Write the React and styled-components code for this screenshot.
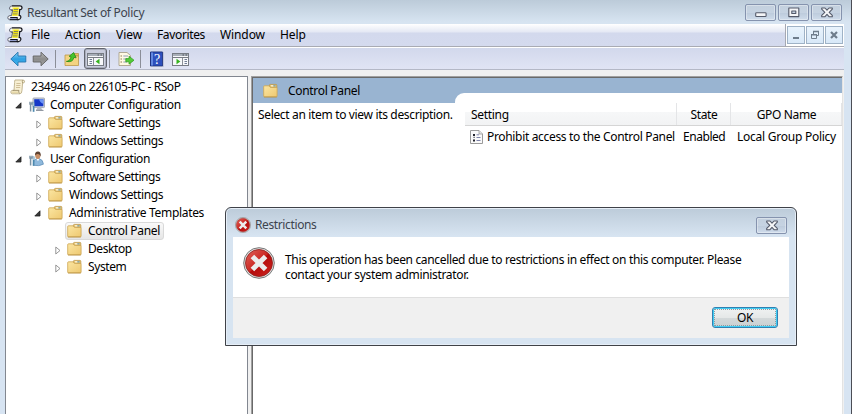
import React from 'react';
import styled, { createGlobalStyle, css } from 'styled-components';

const GlobalStyle = createGlobalStyle`
  * { box-sizing: border-box; }
  html, body { margin: 0; padding: 0; }
  body {
    font-family: "Noto Sans", "Open Sans", sans-serif;
    font-size: 12px;
    line-height: 16px;
    color: #000;
    overflow: hidden;
  }
  svg { display: block; flex: none; }
`;

/* ---------- shared ---------- */

const Label = styled.span`
  white-space: nowrap;
  letter-spacing: ${(p) => p.$ls ?? -0.3}px;
`;

/* ---------- main window ---------- */

const Window = styled.div`
  position: relative;
  display: flex;
  flex-direction: column;
  width: 852px;
  height: 414px;
  overflow: hidden;
  background: #d7e4f2;
  border-right: 1px solid #4b4d55;
`;

const TitleBar = styled.header`
  flex: none;
  height: 24px;
  display: flex;
  align-items: flex-start;
  padding: 4px 9px 0 7px;
  background: linear-gradient(#bccbd9, #d7e4f1 22px);
  color: #3d444e;
`;

const TitleText = styled.div`
  flex: 1;
  display: flex;
  gap: 4px;
  padding-top: 1px;
`;

const CaptionButtons = styled.div`
  display: flex;
  gap: 2px;
`;

const CaptionButton = styled.button`
  width: 31px;
  height: 17px;
  padding: 0;
  display: flex;
  align-items: center;
  justify-content: center;
  border: 1px solid #8593ae;
  border-radius: 2px;
  box-shadow: inset 0 0 0 1px rgba(255, 255, 255, 0.35);
  background: linear-gradient(#c3d0de, #c6d3e2 50%, #bccadb 51%, #cfdceb);
`;

const Body = styled.div`
  flex: 1;
  min-height: 0;
  display: flex;
  flex-direction: column;
  margin: 0 7px 0 5px;
  background: #f0f0f0;
`;

const MenuBar = styled.nav`
  flex: none;
  height: 24px;
  display: flex;
  background: #fff;
  border-bottom: 1px solid #fff;
`;

const MenuItems = styled.div`
  width: 781px;
  display: flex;
  align-items: flex-start;
  padding: 3px 0 0 2px;
  background: linear-gradient(#fff, #e4e8f4 8px, #d3d9ed 9px, #d4daee);
  border-right: 1px solid #a5a8b2;
  border-bottom: 1px solid #a9abb3;
`;

const MenuItem = styled.div`
  width: ${(p) => p.$w}px;
`;

const ChildButtons = styled.div`
  flex: 1;
  display: flex;
  gap: 1px;
  padding: 2px 0 0 1px;
  border-bottom: 1px solid #a9abb3;
`;

const ChildButton = styled.button`
  width: 18px;
  height: 18px;
  padding: 0;
  display: flex;
  align-items: center;
  justify-content: center;
  border: 1px solid #9fb2c6;
  background: linear-gradient(#e9f3fc, #d8e8f8);
`;

const Toolbar = styled.div`
  flex: none;
  height: 22px;
  display: flex;
  align-items: center;
  padding-left: 5px;
  background: linear-gradient(#d2d8ec, #e0e4f4);
  border-bottom: 1px solid #b4b8c6;
`;

const Tool = styled.div`
  width: ${(p) => p.$w ?? 16}px;
  height: 21px;
  margin-left: ${(p) => p.$gap ?? 0}px;
  padding-top: 1px;
  display: flex;
  align-items: center;
  justify-content: center;
  ${(p) =>
    p.$pressed &&
    css`
      border: 1px solid #62656f;
      border-radius: 3px;
      box-shadow: inset 0 0 0 1px #a9adbb;
      background: #c9cddd;
    `}
`;

const Separator = styled.div`
  width: 1px;
  height: 18px;
  margin-left: ${(p) => p.$gap}px;
  background: #8b8e98;
`;

const Panes = styled.main`
  flex: 1;
  min-height: 0;
  display: flex;
  gap: 3px;
  padding-top: 6px;
`;

/* ---------- tree ---------- */

const TreePane = styled.section`
  width: 243px;
  padding-top: 1px;
  background: #fff;
  border: 1px solid #828790;
  border-bottom: 0;
`;

const TreeRow = styled.div`
  height: 18px;
  display: flex;
  align-items: center;
  padding-left: ${(p) => Math.max(0, p.$depth - 1) * 19 + (p.$depth ? 8 : 4)}px;
`;

const Twisty = styled.span`
  width: 15px;
  padding-left: ${(p) => (p.$open ? 1 : 3)}px;
  padding-top: ${(p) => (p.$open ? 1 : 2)}px;
`;

const TreeItem = styled.div`
  height: 18px;
  display: flex;
  align-items: center;
  gap: 5px;
  ${(p) =>
    p.$selected &&
    css`
      margin-left: -2px;
      padding: 0 3px 0 1px;
      border: 1px solid #d9d9d9;
      border-radius: 3px;
      background: linear-gradient(#f9f9f9, #e6e6e6);
    `}
`;

/* ---------- result pane ---------- */

const ResultPane = styled.section`
  flex: 1;
  display: flex;
  flex-direction: column;
  margin-right: 1px;
  background: #fff;
  border-top: 1px solid #a0a0a0;
  border-left: 1px solid #a0a0a0;
  border-right: 1px solid #e3e3e3;
`;

const ResultInner = styled.div`
  flex: 1;
  display: flex;
  flex-direction: column;
  border-top: 1px solid #696969;
  border-left: 1px solid #696969;
`;

const Banner = styled.div`
  height: 25px;
  display: flex;
  background: #99b4d1;
`;

const BannerTitle = styled.div`
  width: 202px;
  display: flex;
  align-items: center;
  gap: 9px;
  padding-left: 10px;
`;

const BannerNotch = styled.div`
  flex: 1;
  align-self: flex-end;
  height: 10px;
  background: #fff;
  border-top-left-radius: 9px;
`;

const ResultContent = styled.div`
  flex: 1;
  display: flex;
`;

const Description = styled.div`
  width: 212px;
  padding: 4px 0 0 5px;
`;

const List = styled.div`
  flex: 1;
`;

const Columns = styled.div`
  display: grid;
  grid-template-columns: 212px 54px 1fr;
`;

const HeadRow = styled(Columns)`
  height: 23px;
  border-bottom: 1px solid #d5d5d5;
  background: linear-gradient(#fff 9px, #f6f7f8 9px, #f2f3f4);
`;

const HeadCell = styled.div`
  padding: 4px 0 0 ${(p) => (p.$center ? 1 : 6)}px;
  text-align: ${(p) => (p.$center ? 'center' : 'left')};
  border-right: 1px solid #e4e5e7;
`;

const DataRow = styled(Columns)`
  height: 22px;
  align-items: center;
`;

const DataCell = styled.div`
  display: flex;
  gap: 4px;
  padding-left: ${(p) => p.$pad ?? 6}px;
`;

/* ---------- dialog ---------- */

const Dialog = styled.div`
  position: absolute;
  left: 225px;
  top: 207px;
  width: 572px;
  height: 139px;
  display: flex;
  flex-direction: column;
  padding: 0 6px 6px;
  border: 1px solid #3f4248;
  border-radius: 6px 6px 0 0;
  box-shadow: inset 0 0 0 1px #e6eef7;
  background: linear-gradient(#bccbd9, #d7e4f1 28px);
`;

const DialogTitle = styled.div`
  flex: none;
  height: 29px;
  display: flex;
  justify-content: space-between;
  padding: 9px 3px 0 3px;
  color: #3d444e;
`;

const DialogCaption = styled.div`
  display: flex;
  gap: 4px;
`;

const DialogBody = styled.div`
  flex: none;
  height: 60px;
  margin: 0 1px;
  display: flex;
  gap: 10px;
  padding: 10px 0 0 10px;
  background: #fff;
`;

const Message = styled.div`
  display: flex;
  flex-direction: column;
  padding-top: 5px;
  line-height: 15px;
`;

const DialogFooter = styled.div`
  height: 41px;
  margin: 0 1px;
  display: flex;
  justify-content: flex-end;
  padding: 9px 11px 0 0;
  border-top: 1px solid #dfdfdf;
  background: #f0f0f0;
`;

const OkButton = styled.button`
  width: 66px;
  height: 21px;
  padding: 1px;
  border: 1px solid #3180b2;
  border-radius: 3px;
  box-shadow: inset 0 0 0 1px #3fcdf3;
  background: linear-gradient(#f0f2f2, #e5e8e8 50%, #d4d9da 51%, #c9d0d2);
  font: inherit;
`;

const FocusRing = styled.span`
  display: block;
  height: 17px;
  line-height: 15px;
  border: 1px dotted #8a9ba3;
`;

/* ---------- icons ---------- */

const InkScroll = () => (
  <svg width="16" height="16" viewBox="0 0 16 16">
    <path d="M5 .8H13.2Q15.2 1 15 3Q14.8 4.8 12.6 4.5L12.2 10.2Q14.4 10.4 13.8 12.6Q13.2 14.8 11 14.8H2.6Q.4 14.6.7 12.4Q1 10.4 3.2 10.6H4.6L5.6 5H4Q2.2 4.8 2.5 2.9Q3 .8 5 .8Z" fill="#f8f8f4" />
    <path d="M5.2 1.6H12.4L11.6 11H4.6Z" fill="#fbf6a0" />
    <path d="M6.4 3.4H11.6M6.1 5.6H11.3M5.7 7.8H11M5.4 10H10.6" stroke="#f5e60a" strokeWidth="1.3" />
    <path d="M6.6 4.5H11.3M6.3 6.7H10.9M5.9 8.9H10.6" stroke="#5a5f3c" strokeWidth=".7" />
    <path d="M5 .9H13.2M4 5H5.8M2.6 14.7H11.4" stroke="#14151c" strokeWidth="1.2" />
    <path d="M5 .9Q2.9 1 2.5 3Q2.3 4.8 4 5M5.7 5L4.5 10.6H3Q1 10.6.8 12.4Q.6 14.4 2.6 14.7" fill="none" stroke="#55596a" strokeWidth=".9" />
    <path d="M13.2.9Q15.2 1.2 15 3Q14.7 4.9 12.7 4.5L12.2 10.4Q14.2 10.6 13.8 12.6Q13.3 14.6 11.2 14.7Q9.8 14.6 10.1 12.6H3.2" fill="none" stroke="#14151c" strokeWidth="1.2" />
    <path d="M2.4 13.6H9.4" stroke="#8d99cf" strokeWidth="1" />
  </svg>
);

const PaleScroll = () => (
  <svg width="16" height="16" viewBox="0 0 16 16">
    <path d="M5 1H13Q14.8 1.2 14.6 2.9Q14.4 4.2 12.6 4L12 11.2Q12 14.8 9.8 14.8H2.2Q.6 14.4.8 12.8Q1 11.4 2.6 11.4H4L4.6 3.6Q4.6 1.4 5 1Z" fill="#f8f0d4" stroke="#b5a77f" strokeWidth=".8" />
    <path d="M12.6 4Q11.8 2 13 1" fill="none" stroke="#9d8e66" strokeWidth=".8" />
    <path d="M6.4 4.5H10.6M6.2 6.5H10.4M6 8.5H10.2" stroke="#cbb991" strokeWidth=".9" />
    <path d="M2.6 11.4H9Q8 13 9.6 14.6" fill="none" stroke="#9d8e66" strokeWidth=".9" />
    <path d="M2 13.2H8" stroke="#e5d6a4" strokeWidth="1.4" />
  </svg>
);

const Folder = () => (
  <svg width="16" height="16" viewBox="0 0 16 16">
    <defs>
      <linearGradient id="folderFill" x1="0" y1="0" x2="1" y2="1">
        <stop offset="0" stopColor="#fbe6a2" />
        <stop offset="1" stopColor="#eec870" />
      </linearGradient>
    </defs>
    <path d="M6.5 4V2.2Q6.5 1.4 7.3 1.4H13Q13.8 1.4 13.8 2.2V5Z" fill="#eccb74" stroke="#bb9549" strokeWidth=".8" />
    <path d="M8 2.9H10.4" stroke="#fff" strokeWidth="1" />
    <path d="M10.4 2.9H12.6" stroke="#4f94cf" strokeWidth="1" />
    <path d="M.7 3.6Q.7 2.8 1.5 2.8H6L7.4 4.4H13.3Q14.1 4.4 14.1 5.2V13.2Q14.1 13.9 13.3 13.9H1.5Q.7 13.9.7 13.2Z" fill="url(#folderFill)" stroke="#cda552" strokeWidth=".8" />
    <path d="M1 14H13.8" stroke="#b08a3e" strokeWidth=".6" />
  </svg>
);

const Tools = () => (
  <g>
    <path d="M1.6 7V14.5M1 4.8V7H3V4.8" stroke="#7c93a5" strokeWidth="1.5" fill="none" />
    <path d="M4.6 5.5V14.8" stroke="#4c88ad" strokeWidth="1.7" />
    <path d="M4.6 5.5V9" stroke="#b0c9d8" strokeWidth="1" />
  </g>
);

const Computer = () => (
  <svg width="16" height="16" viewBox="0 0 16 16">
    <rect x="4" y="1" width="11.5" height="9.6" rx=".8" fill="#d6dbe2" stroke="#868e9b" strokeWidth=".7" />
    <rect x="5.2" y="2.2" width="9.2" height="7.1" fill="#1538c8" />
    <path d="M10 2.2H14.4V6.8Q11.2 6 10 2.2Z" fill="#6c94f5" />
    <path d="M8.5 10.7H12L13.5 13H7Z" fill="#b2b8c2" />
    <path d="M7 13.4H14.5" stroke="#858c97" strokeWidth="1" />
    <Tools />
  </svg>
);

const User = () => (
  <svg width="16" height="16" viewBox="0 0 16 16">
    <path d="M4.4 14.3Q4 8.5 8 7.6H10.2Q14.2 8.8 14.4 13.2Q10 15.5 4.4 14.3Z" fill="#8fb9dc" stroke="#5c8bb4" strokeWidth=".7" />
    <path d="M7.4 7.7L9 10.2L10.4 7.7Z" fill="#fff" />
    <ellipse cx="8.8" cy="4.6" rx="2.6" ry="3.4" fill="#c98f66" />
    <path d="M6 4.5Q5.8.7 9 .6Q12.2.8 11.7 5.4Q10.9 3.2 9 3Q7 2.8 6 4.5Z" fill="#5b4131" />
    <Tools />
  </svg>
);

const PolicyDoc = () => (
  <svg width="13" height="16" viewBox="0 0 13 16">
    <path d="M.5 1.5H9L12.5 5V14.5H.5Z" fill="#fafafa" stroke="#9b9b9b" />
    <path d="M9 1.5V5H12.5" fill="#e5e5e5" stroke="#9b9b9b" strokeWidth=".8" />
    <path d="M3 5H5V7H3ZM3 10.5H5V12.5H3Z" fill="#22242c" />
    <path d="M3.5 8.3H4.7" stroke="#22242c" />
    <path d="M6.5 5.8H9M6.5 8.5H10.5M6.5 11.5H10.5" stroke="#7e83a8" />
  </svg>
);

const Arrow = ({ forward }) => (
  <svg width="17" height="16" viewBox="0 0 17 16">
    <defs>
      <linearGradient id={forward ? 'fwd' : 'back'} x1="0" y1="0" x2="0" y2="1">
        <stop offset="0" stopColor={forward ? '#b9b9b9' : '#8bd4f8'} />
        <stop offset=".5" stopColor={forward ? '#8b8b8b' : '#2f9fe2'} />
        <stop offset="1" stopColor={forward ? '#a5a5a5' : '#45bdf2'} />
      </linearGradient>
    </defs>
    <path
      d="M.8 8L8 1.2V5H15.8V11H8V14.8Z"
      transform={forward ? 'translate(17 0) scale(-1 1)' : undefined}
      fill={`url(#${forward ? 'fwd' : 'back'})`}
      stroke={forward ? '#606060' : '#2472ab'}
      strokeWidth=".9"
      strokeLinejoin="round"
    />
  </svg>
);

const UpFolder = () => (
  <svg width="16" height="16" viewBox="0 0 16 16">
    <path d="M9 4V2.5H14.5V5Z" fill="#e8c15c" stroke="#b38f42" strokeWidth=".7" />
    <path d="M1 4H7L8.5 5H14.5V14.5H1Z" fill="#f3d382" stroke="#bd9749" strokeWidth=".8" />
    <path d="M3.2 11.5Q6.8 10.5 6.8 6H4.8L8.5 1.3L12 6H9.8Q9.8 11.5 3.2 11.5Z" fill="#45c42c" stroke="#238813" strokeWidth=".7" transform="rotate(12 8 7)" />
  </svg>
);

const PanelIcon = ({ right }) => (
  <svg width="17" height="15" viewBox="0 0 17 15">
    <rect x=".5" y="1.5" width="16" height="12" fill="#f7f8fa" stroke="#777c84" />
    <path d="M1 3H16" stroke="#a8afb8" strokeWidth="2" />
    <path d="M10.5 3H12M13.5 3H15" stroke="#4b5059" />
    <path d="M1 5.5H16" stroke="#777c84" />
    <path d={right ? 'M10.5 6V13' : 'M6.5 6V13'} stroke="#8b9098" />
    {right ? (
      <>
        <path d="M4.5 6.8L8.4 9.5L4.5 12.2Z" fill="#35b31e" />
        <path d="M12.5 7.5H15M12.5 9.5H15M12.5 11.5H15" stroke="#6f7c93" />
      </>
    ) : (
      <>
        <path d="M12.5 6.8L8.6 9.5L12.5 12.2Z" fill="#35b31e" />
        <path d="M2.5 7.5H5M2.5 9.5H5M2.5 11.5H5" stroke="#6f7c93" />
      </>
    )}
  </svg>
);

const ExportIcon = () => (
  <svg width="17" height="16" viewBox="0 0 17 16">
    <path d="M1 1.5H9L12.5 4.5V14.5H1Z" fill="#fff9e3" stroke="#aaa18a" strokeWidth=".9" />
    <path d="M2.5 5H4M2.5 8H4M2.5 11H4" stroke="#8e7c55" />
    <path d="M5.3 5H10M5.3 8H9M5.3 11H9" stroke="#8f9fb4" />
    <path d="M7.8 7.6H11V5.2L16 9.2L11 13.2V10.8H7.8Z" fill="#54cc39" stroke="#2d9a1b" strokeWidth=".7" />
  </svg>
);

const QuestionText = styled.text`
  font: 14px "Liberation Serif", serif;
  fill: #fff;
`;

const HelpIcon = () => (
  <svg width="14" height="16" viewBox="0 0 14 16">
    <path d="M.5 1H12.5V15H.5Z" fill="#2d50bd" stroke="#1d3280" />
    <path d="M1 1.5H3V14.5H1Z" fill="#6287df" />
    <path d="M13.3 1V15.5H1" fill="none" stroke="#a5abc0" strokeWidth=".6" />
    <QuestionText x="4" y="12.6">?</QuestionText>
  </svg>
);

const ErrorIcon = ({ size }) => (
  <svg width={size} height={size} viewBox="0 0 32 32">
    <defs>
      <linearGradient id="errorFill" x1="0" y1="0" x2="1" y2="1">
        <stop offset="0" stopColor="#e0645c" />
        <stop offset=".48" stopColor="#cb2823" />
        <stop offset=".52" stopColor="#b40c0c" />
        <stop offset="1" stopColor="#d02520" />
      </linearGradient>
    </defs>
    <circle cx="16" cy="16" r="15.3" fill="#e2e2e2" stroke="#777" strokeWidth="1" />
    <circle cx="16" cy="16" r="13.5" fill="url(#errorFill)" stroke="#8b1d1b" strokeWidth=".8" />
    <path d="M9.4 9.4L22.6 22.6M22.6 9.4L9.4 22.6" stroke="#ececec" strokeWidth="5" />
  </svg>
);

const TwistyIcon = ({ open }) =>
  open ? (
    <svg width="7" height="7" viewBox="0 0 7 7">
      <path d="M6 .8V6H.8Z" fill="#3a3a3a" stroke="#1f1f1f" strokeWidth=".8" />
    </svg>
  ) : (
    <svg width="6" height="9" viewBox="0 0 6 9">
      <path d="M.8 1L5 4.5L.8 8Z" fill="#fff" stroke="#8c8c8c" strokeWidth=".9" />
    </svg>
  );

const MinimizeIcon = () => (
  <svg width="12" height="11" viewBox="0 0 12 11">
    <rect x=".7" y="5.7" width="10.4" height="3.8" rx=".8" fill="#f4f5f7" stroke="#545a6a" strokeWidth="1.1" />
  </svg>
);

const MaximizeIcon = () => (
  <svg width="12" height="11" viewBox="0 0 12 11">
    <path fillRule="evenodd" d="M.8 1H10.8V9.6H.8ZM3.8 4V6.5H7.8V4Z" fill="#f4f5f7" stroke="#545a6a" strokeWidth="1.1" strokeLinejoin="round" />
  </svg>
);

const CloseIcon = () => (
  <svg width="12" height="11" viewBox="0 0 12 11">
    <path d="M.7 1H4L6 3.2L8 1H11.3V2.2L8.2 5.3L11.3 8.4V9.7H8L6 7.4L4 9.7H.7V8.4L3.8 5.3L.7 2.2Z" fill="#f4f5f7" stroke="#545a6a" strokeWidth="1.1" strokeLinejoin="round" />
  </svg>
);

const ChildMinimize = () => (
  <svg width="10" height="10" viewBox="0 0 10 10">
    <path d="M2 8H8" stroke="#6e7c8b" strokeWidth="2" />
  </svg>
);

const ChildRestore = () => (
  <svg width="10" height="10" viewBox="0 0 10 10">
    <path d="M3.5 4V1.5H8.5V5.5H7M1.5 4.5H6.5V8.5H1.5Z" fill="none" stroke="#6e7c8b" />
    <path d="M3 1.5H9M1 4.8H7" stroke="#6e7c8b" strokeWidth="1.6" />
  </svg>
);

const ChildClose = () => (
  <svg width="10" height="10" viewBox="0 0 10 10">
    <path d="M2 2L8 8M8 2L2 8" stroke="#6e7c8b" strokeWidth="2.2" />
  </svg>
);

/* ---------- data ---------- */

const MENU = [
  { text: 'File', w: 34, ls: -0.05 },
  { text: 'Action', w: 51, ls: 0.05 },
  { text: 'View', w: 41, ls: -0.06 },
  { text: 'Favorites', w: 63, ls: -0.36 },
  { text: 'Window', w: 60, ls: -0.1 },
  { text: 'Help', w: 40, ls: -0.1 },
];

const TREE = [
  { text: '234946 on 226105-PC - RSoP', depth: 0, icon: <PaleScroll />, ls: -0.43 },
  { text: 'Computer Configuration', depth: 1, icon: <Computer />, open: true, ls: -0.32 },
  { text: 'Software Settings', depth: 2, icon: <Folder />, open: false, ls: -0.44 },
  { text: 'Windows Settings', depth: 2, icon: <Folder />, open: false, ls: -0.37 },
  { text: 'User Configuration', depth: 1, icon: <User />, open: true, ls: -0.4 },
  { text: 'Software Settings', depth: 2, icon: <Folder />, open: false, ls: -0.44 },
  { text: 'Windows Settings', depth: 2, icon: <Folder />, open: false, ls: -0.37 },
  { text: 'Administrative Templates', depth: 2, icon: <Folder />, open: true, ls: -0.32 },
  { text: 'Control Panel', depth: 3, icon: <Folder />, selected: true, ls: -0.31 },
  { text: 'Desktop', depth: 3, icon: <Folder />, open: false, ls: -0.42 },
  { text: 'System', depth: 3, icon: <Folder />, open: false, ls: -0.4 },
];

export default function App() {
  return (
    <>
      <GlobalStyle />
      <Window>
        <TitleBar>
          <TitleText>
            <InkScroll />
            <Label $ls={-0.31}>Resultant Set of Policy</Label>
          </TitleText>
          <CaptionButtons>
            <CaptionButton aria-label="Minimize"><MinimizeIcon /></CaptionButton>
            <CaptionButton aria-label="Maximize"><MaximizeIcon /></CaptionButton>
            <CaptionButton aria-label="Close"><CloseIcon /></CaptionButton>
          </CaptionButtons>
        </TitleBar>

        <Body>
          <MenuBar>
            <MenuItems>
              <MenuItem $w={24}><InkScroll /></MenuItem>
              {MENU.map((m) => (
                <MenuItem key={m.text} $w={m.w}>
                  <Label $ls={m.ls}>{m.text}</Label>
                </MenuItem>
              ))}
            </MenuItems>
            <ChildButtons>
              <ChildButton aria-label="Minimize view"><ChildMinimize /></ChildButton>
              <ChildButton aria-label="Restore view"><ChildRestore /></ChildButton>
              <ChildButton aria-label="Close view"><ChildClose /></ChildButton>
            </ChildButtons>
          </MenuBar>

          <Toolbar>
            <Tool $w={17}><Arrow /></Tool>
            <Tool $w={17} $gap={5}><Arrow forward /></Tool>
            <Separator $gap={6} />
            <Tool $gap={8}><UpFolder /></Tool>
            <Tool $w={23} $gap={4} $pressed><PanelIcon /></Tool>
            <Separator $gap={2} />
            <Tool $w={17} $gap={8}><ExportIcon /></Tool>
            <Separator $gap={5} />
            <Tool $w={14} $gap={9}><HelpIcon /></Tool>
            <Tool $w={17} $gap={8}><PanelIcon right /></Tool>
          </Toolbar>

          <Panes>
            <TreePane>
              {TREE.map((n, i) => (
                <TreeRow key={i} $depth={n.depth}>
                  {n.depth > 0 && (
                    <Twisty $open={n.open}>
                      {n.open !== undefined && <TwistyIcon open={n.open} />}
                    </Twisty>
                  )}
                  <TreeItem $selected={n.selected}>
                    {n.icon}
                    <Label $ls={n.ls}>{n.text}</Label>
                  </TreeItem>
                </TreeRow>
              ))}
            </TreePane>

            <ResultPane>
              <ResultInner>
                <Banner>
                  <BannerTitle>
                    <Folder />
                    <Label $ls={-0.31}>Control Panel</Label>
                  </BannerTitle>
                  <BannerNotch />
                </Banner>
                <ResultContent>
                  <Description>
                    <Label $ls={-0.34}>Select an item to view its description.</Label>
                  </Description>
                  <List>
                    <HeadRow>
                      <HeadCell><Label $ls={-0.3}>Setting</Label></HeadCell>
                      <HeadCell $center><Label $ls={-0.4}>State</Label></HeadCell>
                      <HeadCell $center><Label $ls={-0.35}>GPO Name</Label></HeadCell>
                    </HeadRow>
                    <DataRow>
                      <DataCell $pad={5}>
                        <PolicyDoc />
                        <Label $ls={-0.33}>Prohibit access to the Control Panel</Label>
                      </DataCell>
                      <DataCell><Label $ls={-0.45}>Enabled</Label></DataCell>
                      <DataCell><Label $ls={-0.25}>Local Group Policy</Label></DataCell>
                    </DataRow>
                  </List>
                </ResultContent>
              </ResultInner>
            </ResultPane>
          </Panes>
        </Body>

        <Dialog role="dialog">
          <DialogTitle>
            <DialogCaption>
              <ErrorIcon size={16} />
              <Label $ls={-0.38}>Restrictions</Label>
            </DialogCaption>
            <CaptionButton aria-label="Close dialog"><CloseIcon /></CaptionButton>
          </DialogTitle>
          <DialogBody>
            <ErrorIcon size={32} />
            <Message>
              <Label $ls={-0.34}>
                This operation has been cancelled due to restrictions in effect on this computer. Please
              </Label>
              <Label $ls={-0.33}>contact your system administrator.</Label>
            </Message>
          </DialogBody>
          <DialogFooter>
            <OkButton>
              <FocusRing><Label $ls={-0.3}>OK</Label></FocusRing>
            </OkButton>
          </DialogFooter>
        </Dialog>
      </Window>
    </>
  );
}
